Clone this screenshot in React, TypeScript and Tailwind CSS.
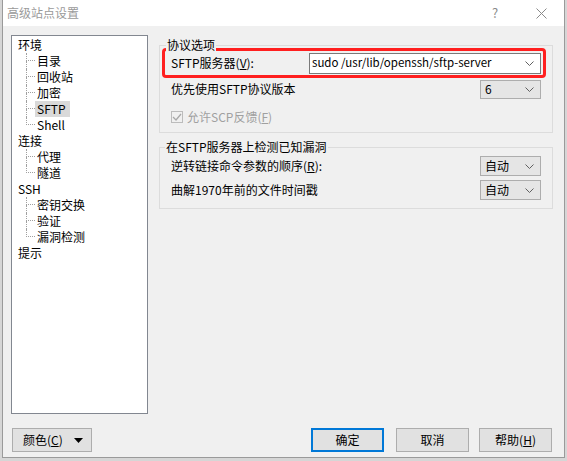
import React from "react";

type Node = { label: React.ReactNode; children?: string[] };

const tree: Node[] = [
  { label: "环境", children: ["目录", "回收站", "加密", "SFTP", "Shell"] },
  { label: "连接", children: ["代理", "隧道"] },
  { label: "SSH", children: ["密钥交换", "验证", "漏洞检测"] },
  { label: "提示" },
];

const Chevron = () => (
  <svg width="9" height="5" viewBox="0 0 9 5" className="shrink-0">
    <polyline points="0.5,0.5 4.5,4.5 8.5,0.5" fill="none" stroke="#606060" strokeWidth="1" />
  </svg>
);

const SmallCombo = ({ value }: { value: string }) => (
  <div className="flex items-center justify-between w-[61px] h-[20px] border border-[#adadad] bg-[#e5e5e5] pl-[4px] pr-[6px] leading-[18px]">
    <span>{value}</span>
    <Chevron />
  </div>
);

const Button = ({ children, primary }: { children: React.ReactNode; primary?: boolean }) => (
  <button
    className={
      primary
        ? "w-[73px] h-[24px] border-2 border-[#0078d7] bg-[#e1e1e1] leading-[20px]"
        : "w-[73px] h-[24px] border border-[#adadad] bg-[#e1e1e1] leading-[22px]"
    }
  >
    {children}
  </button>
);

const TreeView = () => (
  <div className="w-[137px] h-[379px] border border-[#828790] bg-white pt-[1px] pl-[6px] leading-[16px]">
    {tree.map((node, i) => (
      <div key={i}>
        <div className="h-[16px] flex items-center">{node.label}</div>
        {node.children && (
          <div className="ml-[8px]">
            {node.children.map((c, j) => {
              const last = j === node.children!.length - 1;
              return (
                <div key={c} className="flex h-[16px] items-center">
                  <div className="w-[9px] h-[16px] flex flex-col shrink-0">
                    <div className="h-[8px] border-l border-b border-dotted border-[#a0a0a0]" />
                    {!last && <div className="h-[8px] border-l border-dotted border-[#a0a0a0]" />}
                  </div>
                  <span
                    className={
                      c === "SFTP"
                        ? "pl-[2px] pr-[4px] bg-[#d9d9d9] leading-[16px]"
                        : "pl-[2px] leading-[16px]"
                    }
                  >
                    {c}
                  </span>
                </div>
              );
            })}
          </div>
        )}
      </div>
    ))}
  </div>
);

export default function App() {
  return (
    <div className="w-[567px] h-[461px] bg-[#d6d6d6] font-['Noto_Sans_CJK_SC',sans-serif] text-[12px] text-black overflow-hidden">
      <div className="ml-[2px] w-[563px] h-[458px] border-x border-b border-[#9a9a9a] flex flex-col bg-[#f0f0f0]">
        {/* title bar */}
        <div className="h-[26px] bg-white flex items-center pl-[4px] shrink-0">
          <span className="text-[#9a9a9a] text-[12px]">高级站点设置</span>
          <span className="ml-auto w-[16px] text-center text-[#8a8a8a] text-[13px] mr-[33px]">?</span>
          <svg width="11" height="11" viewBox="0 0 11 11" className="mr-[17px]">
            <line x1="0.5" y1="0.5" x2="10.5" y2="10.5" stroke="#8a8a8a" />
            <line x1="10.5" y1="0.5" x2="0.5" y2="10.5" stroke="#8a8a8a" />
          </svg>
        </div>

        {/* body */}
        <div className="flex-1 flex flex-col pl-[8px] pt-[9px]">
          <div className="flex">
            <TreeView />

            <div className="ml-[11px] w-[394px] flex flex-col">
              {/* group 1 */}
              <div className="relative mt-[10px] h-[88px] border border-[#dcdcdc] pt-[2px] pl-[2px]">
                <span className="absolute -top-[9px] left-[6px] bg-[#f0f0f0] px-[1px] leading-[16px]">协议选项</span>
                <div className="w-[384px] h-[30px] border-[3px] border-[#ff1f1f] rounded-[4px] flex items-center justify-between pl-[6px] pr-[2px]">
                  <span>
                    SFTP服务器(<u>V</u>):
                  </span>
                  <div className="flex items-center justify-between w-[232px] h-[21px] border border-[#7a7a7a] bg-white pl-[2px] pr-[6px]">
                    <span className="text-[11.5px]">sudo /usr/lib/openssh/sftp-server</span>
                    <Chevron />
                  </div>
                </div>
                <div className="flex items-center justify-between h-[22px] pl-[9px] pr-[11px]">
                  <span>优先使用SFTP协议版本</span>
                  <div className="h-[19px] flex items-center">
                    <div className="flex items-center justify-between w-[61px] h-[19px] border border-[#adadad] bg-[#e5e5e5] pl-[4px] pr-[6px]">
                      <span>6</span>
                      <Chevron />
                    </div>
                  </div>
                </div>
                <div className="flex items-center h-[22px] mt-[6px] pl-[9px] text-[#a0a0a0]">
                  <div className="w-[12px] h-[12px] border border-[#bcbcbc] bg-[#f0f0f0] flex items-center justify-center">
                    <svg width="10" height="8" viewBox="0 0 10 8">
                      <polyline points="1,4 4,7 9,1" fill="none" stroke="#a8a8a8" strokeWidth="1.3" />
                    </svg>
                  </div>
                  <span className="ml-[4px]">
                    允许SCP反馈(<u>F</u>)
                  </span>
                </div>
              </div>

              {/* group 2 */}
              <div className="relative mt-[14px] h-[62px] border border-[#dcdcdc] pt-[6px] pl-[11px] pr-[11px]">
                <span className="absolute -top-[9px] left-[5px] bg-[#f0f0f0] px-[1px] leading-[16px]">在SFTP服务器上检测已知漏洞</span>
                <div className="flex items-center justify-between h-[24px]">
                  <span>
                    逆转链接命令参数的顺序(<u>R</u>):
                  </span>
                  <SmallCombo value="自动" />
                </div>
                <div className="flex items-center justify-between h-[24px]">
                  <span>曲解1970年前的文件时间戳</span>
                  <SmallCombo value="自动" />
                </div>
              </div>
            </div>
          </div>

          {/* buttons */}
          <div className="flex mt-[14px] items-center">
            <button className="ml-[1px] w-[80px] h-[24px] border border-[#adadad] bg-[#e1e1e1] flex items-center pl-[10px] pr-[8px] leading-[22px]">
              <span>
                颜色(<u>C</u>)
              </span>
              <svg width="9" height="5" viewBox="0 0 9 5" className="ml-auto">
                <polygon points="0,0 9,0 4.5,5" fill="#000" />
              </svg>
            </button>
            <div className="ml-auto mr-[12px] flex">
              <Button primary>确定</Button>
              <div className="ml-[12px]">
                <Button>取消</Button>
              </div>
              <div className="ml-[10px]">
                <Button>
                  帮助(<u>H</u>)
                </Button>
              </div>
            </div>
          </div>
        </div>
      </div>
    </div>
  );
}
